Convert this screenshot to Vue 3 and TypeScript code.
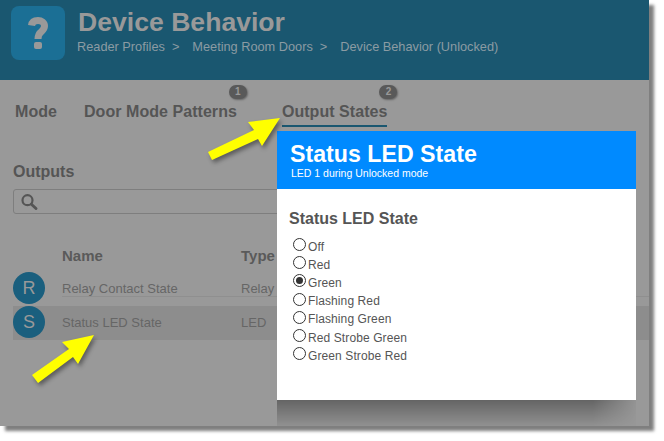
<script setup lang="ts">
const tabs = [
  { label: 'Mode' },
  { label: 'Door Mode Patterns', badge: 1 },
  { label: 'Output States', badge: 2, active: true },
]

const rows = [
  { initial: 'R', name: 'Relay Contact State', type: 'Relay', selected: false },
  { initial: 'S', name: 'Status LED State', type: 'LED', selected: true },
]

const options = ['Off', 'Red', 'Green', 'Flashing Red', 'Flashing Green', 'Red Strobe Green', 'Green Strobe Red']
const current = 'Green'
</script>

<template>
  <div class="shot">
    <div class="window">
      <header class="top">
        <div class="app-icon">
          <svg width="54" height="54" viewBox="0 0 54 54">
            <path d="M20.5 19.5C21 15.5 24 14.5 27 14.5C30.5 14.5 33.5 16.5 33.5 20C33.5 23 31.5 24.5 30 26C28 27.5 27 29 27 33" fill="none" stroke="#999" stroke-width="7" />
            <rect x="23" y="36" width="8" height="7" rx="2" fill="#999" />
          </svg>
        </div>
        <div class="top-text">
          <h1>Device Behavior</h1>
          <div class="crumbs">
            <span>Reader Profiles</span><span class="sep">&gt;</span>
            <span>Meeting Room Doors</span><span class="sep">&gt;</span>
            <span>Device Behavior (Unlocked)</span>
          </div>
        </div>
      </header>

      <main class="content">
        <nav class="tabs">
          <div v-for="t in tabs" :key="t.label" class="tab" :class="{ active: t.active }">
            {{ t.label }}
            <span v-if="t.badge" class="badge">{{ t.badge }}</span>
          </div>
        </nav>

        <h2 class="outputs">Outputs</h2>
        <div class="search">
          <svg width="17" height="16" viewBox="0 0 17 16">
            <circle cx="6.5" cy="6.2" r="5" fill="none" stroke="#555" stroke-width="2.2" />
            <path d="M10.4 10.2 15 14.6" stroke="#555" stroke-width="2.8" stroke-linecap="round" />
          </svg>
        </div>

        <div class="table">
          <div class="thead"><span class="c-name">Name</span><span>Type</span></div>
          <div v-for="r in rows" :key="r.initial" class="row" :class="{ selected: r.selected }">
            <span class="avatar">{{ r.initial }}</span>
            <div class="cells"><span class="c-name">{{ r.name }}</span><span>{{ r.type }}</span></div>
          </div>
        </div>
      </main>

      <section class="modal">
        <div class="modal-head">
          <h3>Status LED State</h3>
          <p>LED 1 during Unlocked mode</p>
        </div>
        <div class="modal-body">
          <h4>Status LED State</h4>
          <label v-for="o in options" :key="o" class="opt">
            <span class="radio" :class="{ on: o === current }"></span>{{ o }}
          </label>
        </div>
      </section>

      <svg class="arrow arrow-a" width="80" height="50" viewBox="206 116 80 50">
        <path d="M280 118 262 146 258 139 212 160 208 152 254 130 248 122Z" fill="#ffff00" />
      </svg>
      <svg class="arrow arrow-b" width="70" height="56" viewBox="30 332 70 56">
        <path d="M94 335 78 364 73 357 38 383 32 375 69 349 62 342Z" fill="#ffff00" />
      </svg>
    </div>
  </div>
</template>

<style scoped>
.shot {
  width: 664px;
  height: 441px;
  background: #fff;
  overflow: hidden;
}

.window {
  position: relative;
  width: 649px;
  height: 426px;
  background: #999;
  box-shadow: 5px 5px 3px rgba(0, 0, 0, 0.5);
  font-family: "Liberation Sans", Arial, sans-serif;
}

.top {
  height: 80px;
  box-sizing: border-box;
  padding: 6px 0 0 11px;
  display: flex;
  gap: 13px;
  background: #1a5770;
}

.app-icon {
  width: 54px;
  height: 54px;
  border-radius: 8px;
  background: #1b6f95;
}

.app-icon svg {
  display: block;
}

h1 {
  margin: 0;
  font-size: 26.6px;
  line-height: 32px;
  font-weight: bold;
  color: #999;
}

.crumbs {
  margin: 1px 0 0 -1px;
  display: flex;
  gap: 7px;
  font-size: 12.75px;
  line-height: 16px;
  color: #8b9ba3;
}

.sep {
  margin-right: 6px;
}

.content {
  padding: 0 0 0 13px;
}

.tabs {
  display: flex;
  height: 46px;
  padding: 23px 0 0 2px;
  gap: 27px;
}

.tab {
  position: relative;
  height: 22px;
  font-size: 16px;
  line-height: 18px;
  font-weight: bold;
  letter-spacing: 0.05px;
  color: #555;
  white-space: nowrap;
}

.tab:nth-child(3) {
  margin-left: 18px;
}

.tab.active {
  border-bottom: 2px solid #1a5770;
}

.badge {
  position: absolute;
  right: -10px;
  top: -18px;
  width: 18px;
  height: 14px;
  border-radius: 7px;
  background: #595959;
  box-shadow: 1px 1px 2px rgba(0, 0, 0, 0.35);
  color: #999;
  font-size: 10px;
  line-height: 14px;
  text-align: center;
}

.outputs {
  margin: 14px 0 0;
  font-size: 16px;
  line-height: 18px;
  color: #555;
}

.search {
  width: 400px;
  height: 25px;
  margin-top: 8px;
  padding: 4px 0 0 7px;
  box-sizing: border-box;
  border: 1px solid #7e7e7e;
  border-radius: 3px;
}

.table {
  margin-top: 33px;
  font-size: 13px;
  color: #666;
}

.thead {
  display: flex;
  height: 25px;
  padding-left: 49px;
  font-size: 15px;
  line-height: 18px;
  font-weight: bold;
  color: #5a5a5a;
}

.c-name {
  width: 179px;
}

.row {
  display: flex;
  height: 34px;
  gap: 17px;
}

.row.selected {
  background: #8d8d8d;
}

.cells {
  flex: 1;
  display: flex;
  height: 15px;
  padding-top: 9px;
  line-height: 16px;
  border-bottom: 1px solid #8f8f8f;
}

.selected .cells {
  border-bottom: 0;
}

.avatar {
  width: 32px;
  height: 32px;
  flex: none;
  border-radius: 50%;
  background: #1a5f7e;
  color: #999;
  font-size: 18px;
  line-height: 32px;
  text-align: center;
}

.modal {
  position: absolute;
  left: 277px;
  top: 131px;
  width: 359px;
  height: 269px;
  background: #fff;
}

.modal::after {
  content: "";
  position: absolute;
  left: 0;
  right: 0;
  top: 100%;
  height: 26px;
  background: linear-gradient(rgba(0, 0, 0, 0.34), rgba(0, 0, 0, 0.05));
  -webkit-mask-image: linear-gradient(to right, #000 88%, rgba(0, 0, 0, 0.1));
  mask-image: linear-gradient(to right, #000 88%, rgba(0, 0, 0, 0.1));
}

.modal-head {
  height: 58px;
  box-sizing: border-box;
  padding: 10px 13px 0;
  background: #008aff;
  color: #fff;
}

h3 {
  margin: 0;
  font-size: 23.2px;
  line-height: 26px;
  font-weight: bold;
}

.modal-head p {
  margin: 0 0 0 1px;
  font-size: 10.5px;
  line-height: 13px;
}

.modal-body {
  padding: 21px 12px;
  color: #555;
}

h4 {
  margin: 0 0 9px;
  font-size: 16px;
  line-height: 18px;
  font-weight: bold;
}

.opt {
  display: flex;
  height: 18.2px;
  align-items: center;
  font-size: 12px;
  letter-spacing: 0.1px;
  line-height: 14px;
  padding: 1px 0 0 4px;
  box-sizing: border-box;
}

.radio {
  position: relative;
  top: -2px;
  box-sizing: border-box;
  width: 13px;
  height: 13px;
  margin-right: 2px;
  border: 1px solid #333;
  border-radius: 50%;
  background: #fff;
}

.radio.on::after {
  content: "";
  position: absolute;
  left: 2px;
  top: 2px;
  width: 7px;
  height: 7px;
  border-radius: 50%;
  background: #333;
}

.arrow {
  position: absolute;
  filter: drop-shadow(2px 3px 2px rgba(0, 0, 0, 0.4));
  overflow: visible;
}

.arrow-a {
  left: 206px;
  top: 116px;
}

.arrow-b {
  left: 30px;
  top: 332px;
}
</style>

<style>
html, body { margin: 0; background: #fff; }
</style>
